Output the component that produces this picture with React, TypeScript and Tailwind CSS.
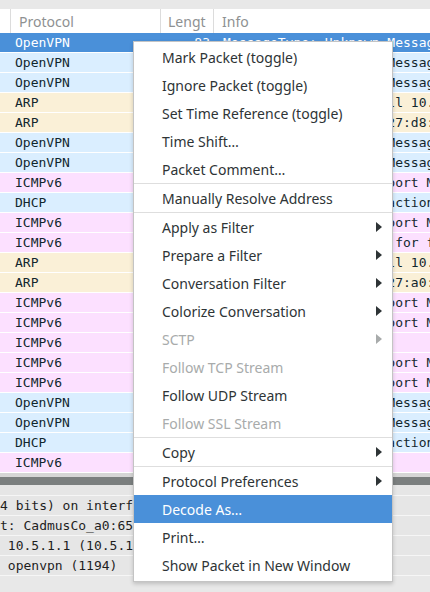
type Row = { proto: string; len: string; info: string };

const rows: Row[] = [
  { proto: 'OpenVPN', len: '83', info: 'MessageType: Unknown Message' },
  { proto: 'OpenVPN', len: '82', info: 'MessageType: Unknown Message' },
  { proto: 'OpenVPN', len: '82', info: 'MessageType: Unknown Message' },
  { proto: 'ARP', len: '42', info: 'Who has 10.5.1.10? Tell 10.5.1.1' },
  { proto: 'ARP', len: '42', info: '10.5.1.2 is at 08:00:27:d8:3c:51' },
  { proto: 'OpenVPN', len: '82', info: 'MessageType: Unknown Message' },
  { proto: 'OpenVPN', len: '82', info: 'MessageType: Unknown Message' },
  { proto: 'ICMPv6', len: '90', info: 'Multicast Listener Report Message v2' },
  { proto: 'DHCP', len: '342', info: 'DHCP Discover - Transaction ID 0x5f3a' },
  { proto: 'ICMPv6', len: '90', info: 'Multicast Listener Report Message v2' },
  { proto: 'ICMPv6', len: '78', info: 'Neighbor Solicitation for fe80::1' },
  { proto: 'ARP', len: '42', info: 'Who has 10.5.1.10? Tell 10.5.1.1' },
  { proto: 'ARP', len: '42', info: '10.5.1.1 is at 08:00:27:a0:65:d1' },
  { proto: 'ICMPv6', len: '90', info: 'Multicast Listener Report Message v2' },
  { proto: 'ICMPv6', len: '90', info: 'Multicast Listener Report Message v2' },
  { proto: 'ICMPv6', len: '70', info: 'Router Solicitation' },
  { proto: 'ICMPv6', len: '90', info: 'Multicast Listener Report Message v2' },
  { proto: 'ICMPv6', len: '90', info: 'Multicast Listener Report Message v2' },
  { proto: 'OpenVPN', len: '82', info: 'MessageType: Unknown Message' },
  { proto: 'OpenVPN', len: '82', info: 'MessageType: Unknown Message' },
  { proto: 'DHCP', len: '342', info: 'DHCP Request  - Transaction ID 0x5f3a' },
  { proto: 'ICMPv6', len: '70', info: 'Router Solicitation' },
];

const rowBg: Record<string, string> = {
  OpenVPN: 'bg-[#daeeff]',
  DHCP: 'bg-[#daeeff]',
  ARP: 'bg-[#faf0d7]',
  ICMPv6: 'bg-[#fce0ff]',
};

type Item = { label: string; sub?: boolean; disabled?: boolean; active?: boolean } | 'sep';

const menu: Item[] = [
  { label: 'Mark Packet (toggle)' },
  { label: 'Ignore Packet (toggle)' },
  { label: 'Set Time Reference (toggle)' },
  { label: 'Time Shift…' },
  { label: 'Packet Comment…' },
  'sep',
  { label: 'Manually Resolve Address' },
  'sep',
  { label: 'Apply as Filter', sub: true },
  { label: 'Prepare a Filter', sub: true },
  { label: 'Conversation Filter', sub: true },
  { label: 'Colorize Conversation', sub: true },
  { label: 'SCTP', sub: true, disabled: true },
  { label: 'Follow TCP Stream', disabled: true },
  { label: 'Follow UDP Stream' },
  { label: 'Follow SSL Stream', disabled: true },
  'sep',
  { label: 'Copy', sub: true },
  'sep',
  { label: 'Protocol Preferences', sub: true },
  { label: 'Decode As…', active: true },
  { label: 'Print…' },
  { label: 'Show Packet in New Window' },
];

const details = [
  '4 bits) on interface 0',
  't: CadmusCo_a0:65:d1 (08:00:27:a0:65:d1)',
  ' 10.5.1.1 (10.5.1.1), Dst: 10.5.1.2',
  ' openvpn (1194)',
];

const mono = "font-['DejaVu_Sans_Mono',monospace] text-[13px]";
const sans = "font-['Noto_Sans',sans-serif]";

export default function App() {
  return (
    <div className="relative h-[592px] w-[430px] overflow-hidden bg-[#e8e8e8]">
      {/* packet list */}
      <div className="h-[9px] bg-[#e8e8e8]" />
      <div className={`flex h-[24px] items-center bg-white text-[14px] text-[#8e9192] ${sans}`}>
        <div className="h-full w-[11px] border-r border-[#dcdcdc]" />
        <div className="flex h-full w-[150px] items-center border-r border-[#dcdcdc] pl-[8px]">Protocol</div>
        <div className="flex h-full w-[53px] items-center overflow-hidden border-r border-[#dcdcdc] pl-[7px]">Lengt</div>
        <div className="pl-[8px]">Info</div>
      </div>

      {rows.map((r, i) => (
        <div
          key={i}
          className={`flex h-[20px] items-center whitespace-pre border-b border-white ${mono} ${
            i === 0 ? 'bg-[#4a90d9] text-white' : `${rowBg[r.proto]} text-[#12272e]`
          }`}
        >
          <div className="w-[11px]" />
          <div className="w-[150px] pl-[4px]">{r.proto}</div>
          <div className="w-[53px] pr-[4px] text-right">{r.len}</div>
          <div className="flex-1 overflow-hidden pl-[9px]">{r.info}</div>
        </div>
      ))}

      {/* pane divider */}
      <div className="h-[4px] bg-[#d6d6d6]" />
      <div className="h-[8px] bg-[#7b7f7f]" />
      <div className="h-[11px] border-b border-[#f6f6f6] bg-[#e6e6e6]" />

      {/* packet details */}
      {details.map((d, i) => (
        <div
          key={i}
          className={`flex h-[20px] items-center whitespace-pre border-b border-[#f6f6f6] bg-[#e6e6e6] text-[#1e1e1e] ${mono}`}
        >
          {d}
        </div>
      ))}

      {/* context menu */}
      <div className={`absolute left-[133px] top-[41px] w-[260px] border border-[#c4c4c4] bg-white pb-[2px] pt-[1px] text-[14px] shadow-[0_2px_4px_rgba(0,0,0,0.18)] ${sans}`}>
        {menu.map((m, i) =>
          m === 'sep' ? (
            <div key={i} className="h-px bg-[#dedede]" />
          ) : (
            <div
              key={i}
              className={`flex h-[28px] items-center justify-between pl-[28px] pr-[10px] ${
                m.active ? 'bg-[#4a90d9] text-white' : m.disabled ? 'text-[#a8abab]' : 'text-[#2e3436]'
              }`}
            >
              <span>{m.label}</span>
              {m.sub && (
                <svg width="6" height="10" viewBox="0 0 6 10">
                  <path d="M0 0 L6 5 L0 10 Z" fill={m.disabled ? '#a8abab' : '#2e3436'} />
                </svg>
              )}
            </div>
          ),
        )}
      </div>
    </div>
  );
}
